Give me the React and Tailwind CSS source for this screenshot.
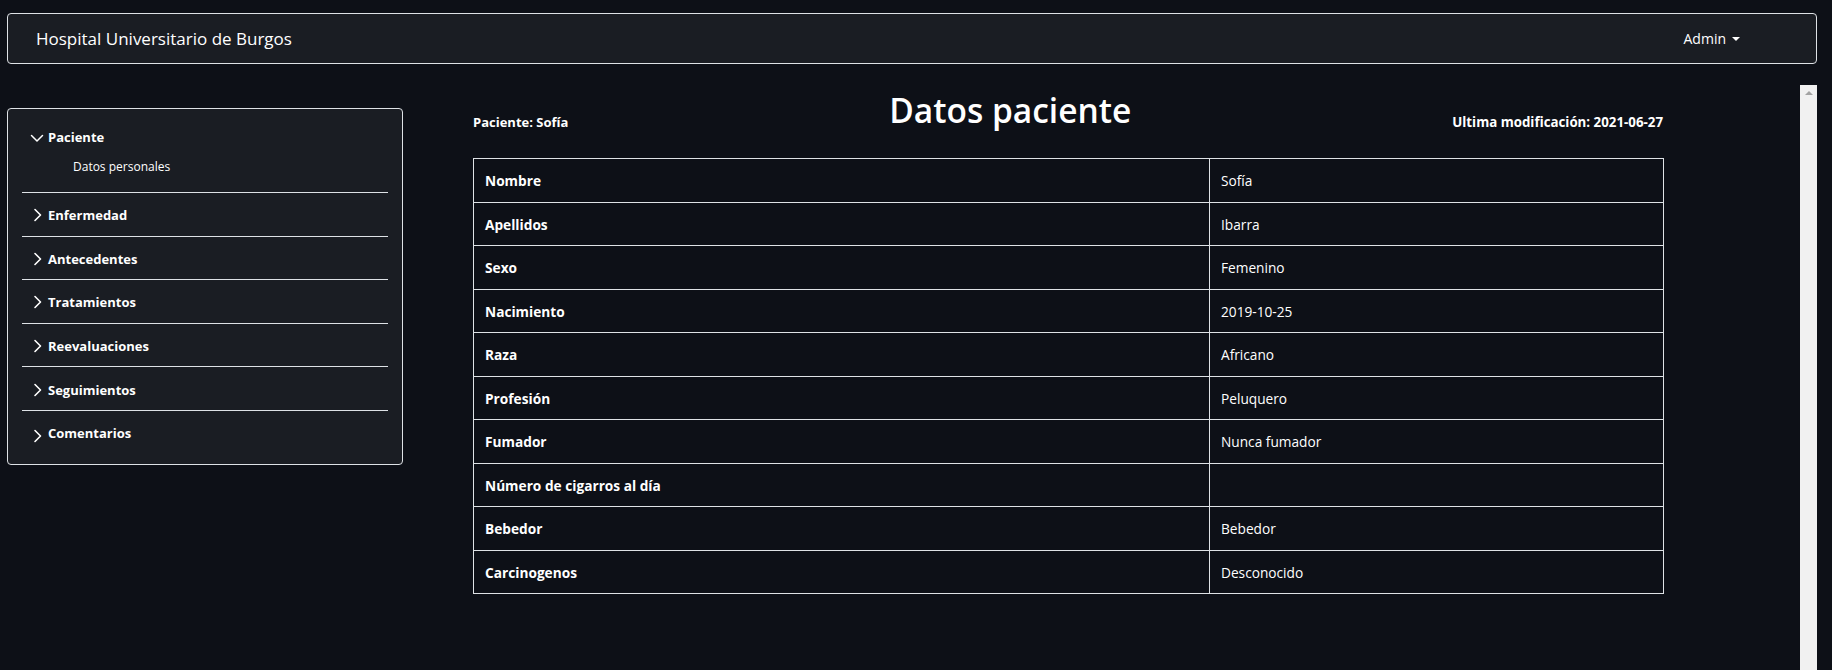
import React from "react";

const rows = [
  ["Nombre", "Sofía"],
  ["Apellidos", "Ibarra"],
  ["Sexo", "Femenino"],
  ["Nacimiento", "2019-10-25"],
  ["Raza", "Africano"],
  ["Profesión", "Peluquero"],
  ["Fumador", "Nunca fumador"],
  ["Número de cigarros al día", ""],
  ["Bebedor", "Bebedor"],
  ["Carcinogenos", "Desconocido"],
];

const sections = ["Enfermedad", "Antecedentes", "Tratamientos", "Reevaluaciones", "Seguimientos", "Comentarios"];

function ChevronDown() {
  return (
    <svg width="14" height="14" viewBox="0 0 14 14" fill="none">
      <path d="M1.5 4.5 L7 10 L12.5 4.5" stroke="#fff" strokeWidth="1.5" strokeLinecap="round" strokeLinejoin="round" />
    </svg>
  );
}

function ChevronRight() {
  return (
    <svg width="14" height="14" viewBox="0 0 14 14" fill="none">
      <path d="M5 1.5 L10.5 7 L5 12.5" stroke="#fff" strokeWidth="1.6" strokeLinecap="round" strokeLinejoin="round" />
    </svg>
  );
}

export default function App() {
  return (
    <div
      className="w-[1832px] h-[670px] bg-[#0d1017] text-white flex flex-col overflow-hidden"
      style={{ fontFamily: '"Open Sans", "Noto Sans", sans-serif' }}
    >
      <nav className="ml-[7px] mr-[15px] mt-[13px] h-[51px] shrink-0 rounded-[4px] border border-[#dee2e6] bg-[#1a1d23] flex items-center justify-between pl-[28px] pr-[76px]">
        <span className="text-[17px] leading-[24px]">Hospital Universitario de Burgos</span>
        <span className="flex items-center text-[14px] leading-[20px]">
          Admin
          <span className="ml-[6px] w-0 h-0 border-l-[4px] border-r-[4px] border-t-[4px] border-l-transparent border-r-transparent border-t-white" />
        </span>
      </nav>

      <div className="mt-[21px] flex flex-1 min-h-0">
        <aside className="ml-[7px] w-[396px] shrink-0 pt-[23px]">
          <div className="rounded-[4px] border border-[#dee2e6] bg-[#1a1d23] px-[14px] pb-[21px]">
            <div className="border-b border-[#dee2e6] pt-[19px] pb-[15px]">
              <div className="flex items-center h-[20px] pl-[8px] gap-[4px] text-[13px] font-bold">
                <ChevronDown />
                <span>Paciente</span>
              </div>
              <div className="mt-[9px] h-[20px] leading-[20px] pl-[51px] text-[12px]">Datos personales</div>
            </div>
            {sections.map((s, i) => (
              <div
                key={s}
                className={
                  i < sections.length - 1
                    ? "h-[43.6px] border-b border-[#dee2e6] flex items-center pt-[2px] pl-[8px] gap-[4px] text-[13px] font-bold"
                    : "h-[32px] flex items-end pl-[8px] gap-[4px] text-[13px] font-bold"
                }
              >
                <ChevronRight />
                <span className="leading-[20px]">{s}</span>
              </div>
            ))}
          </div>
        </aside>

        <main className="flex-1 min-w-0 pl-[70px]">
          <div className="w-[1190px] pt-[5px]">
            <div className="flex justify-between items-start">
              <span className="mt-[22px] text-[13px] leading-[20px] font-bold">Paciente: Sofía</span>
              <h2 className="text-[33.5px] leading-[40px] font-semibold">Datos paciente</h2>
              <span className="mt-[22px] text-[13.3px] leading-[20px] font-bold">Ultima modificación: 2021-06-27</span>
            </div>
            <table className="mt-[26px] w-[1190px] table-fixed border-collapse text-[13.7px]">
              <colgroup>
                <col className="w-[736px]" />
                <col className="w-[454px]" />
              </colgroup>
              <tbody>
                {rows.map(([k, v]) => (
                  <tr key={k}>
                    <td className="h-[43.5px] border border-[#dee2e6] px-[11px] pt-[2px] font-bold leading-[20px]">{k}</td>
                    <td className="h-[43.5px] border border-[#dee2e6] px-[11px] pt-[2px] leading-[20px]">{v}</td>
                  </tr>
                ))}
              </tbody>
            </table>
          </div>
        </main>

        <div className="w-[17px] mr-[15px] shrink-0 bg-[#f1f1f1] flex justify-center pt-[6px]">
          <span className="w-0 h-0 border-l-[4px] border-r-[4px] border-b-[4px] border-l-transparent border-r-transparent border-b-[#a3a3a3]" />
        </div>
      </div>
    </div>
  );
}
